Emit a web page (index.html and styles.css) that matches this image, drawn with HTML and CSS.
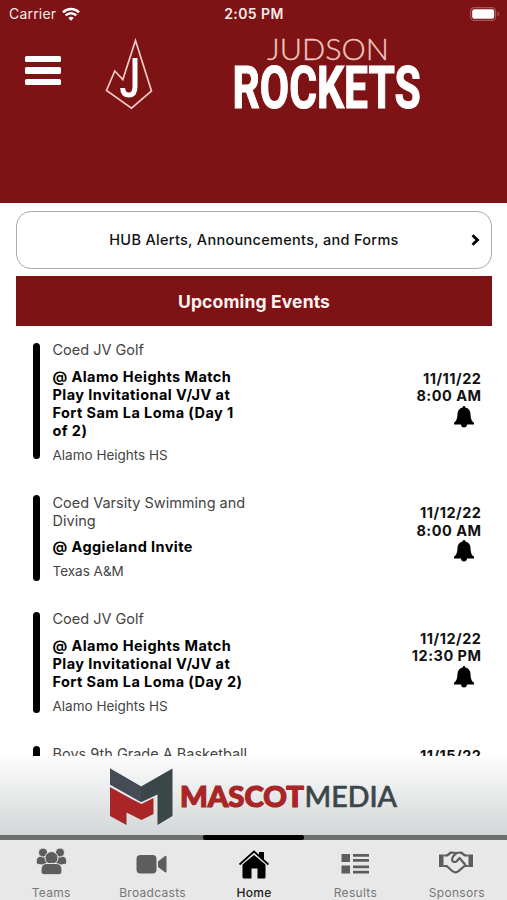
FILE: index.html
```html
<!DOCTYPE html>
<html lang="en">
<head>
<meta charset="utf-8">
<title>Judson Rockets</title>
<link rel="stylesheet" href="styles.css">
</head>
<body>
<svg class="defs" width="0" height="0" aria-hidden="true">
  <symbol id="bell" viewBox="0 0 20 22"><path d="M10 0c.9 0 1.400.6 1.400 1.500 3.200.7 4.900 3.100 5.100 6.200.3 5 .8 6.900 3.500 9.100v1.800H0v-1.800c2.700-2.200 3.200-4.100 3.500-9.100.2-3.100 1.900-5.500 5.100-6.200C8.600.6 9.100 0 10 0zM7 18.500h6c0 1.900-1.400 3-3 3s-3-1.100-3-3z"/></symbol>
</svg>
<div class="app">
  <header class="header">
    <div class="status">
      <div class="carrier"><span class="carrier-name">Carrier</span>
        <svg class="wifi" viewBox="0 0 18 14"><path d="M9 13.700 6.300 10.900a4 4 0 0 1 5.400 0z" fill="#fff"/><path d="M3.700 8.300a7.600 7.600 0 0 1 10.600 0M1 5.300a11.500 11.500 0 0 1 16 0" fill="none" stroke="#fff" stroke-width="2.500"/></svg>
      </div>
      <time class="clock">2:05 PM</time>
      <svg class="battery" viewBox="0 0 30 14"><rect x=".6" y=".6" width="25" height="12.800" rx="3.600" fill="none" stroke="#a85557" stroke-width="1.200"/><rect x="2.200" y="2.200" width="22" height="9.600" rx="2.200" fill="#fff"/><path d="M27.500 4.600c2.300.9 2.300 3.900 0 4.800z" fill="#a85557"/></svg>
    </div>
    <div class="brand">
      <div class="menu"><i></i><i></i><i></i></div>
      <svg class="crest" viewBox="0 0 50 76"><path d="M30.500 5.500 46.500 56 26.500 73.200 1.500 55.500 9.800 36 17.800 44.500z" fill="none" stroke="#f1c9c5" stroke-width="1.700"/><path d="M30 23v28.500q0 8.500-6 8.500-6.300 0-6.300-7" fill="none" stroke="#fff" stroke-width="5"/></svg>
      <svg class="wordmark" viewBox="0 0 200 76"><text class="judson" x="36" y="24.500" textLength="122" lengthAdjust="spacingAndGlyphs">JUDSON</text><text class="rockets" transform="translate(1.500 72.500) scale(.67 1)" x="0" y="0" textLength="281" lengthAdjust="spacingAndGlyphs">ROCKETS</text></svg>
    </div>
  </header>
  <main class="content">
    <div class="hub"><span class="hub-text">HUB Alerts, Announcements, and Forms</span>
      <svg class="chevron" viewBox="0 0 9 12"><path d="M1.500 1.200 6.500 6l-5 4.800" fill="none" stroke="#000" stroke-width="2.800"/></svg>
    </div>
    <h1 class="title">Upcoming Events</h1>
    <section class="events">
      <article class="event event-four">
        <div class="bar"></div>
        <div class="info"><p class="team">Coed JV Golf</p><h2>@ Alamo Heights Match<br>Play Invitational V/JV at<br>Fort Sam La Loma (Day 1<br>of 2)</h2><p class="place">Alamo Heights HS</p></div>
        <div class="when"><span>11/11/22</span><span>8:00 AM</span><svg class="bell"><use href="#bell"/></svg></div>
      </article>
      <article class="event event-short">
        <div class="bar"></div>
        <div class="info"><p class="team">Coed Varsity Swimming and<br>Diving</p><h2>@ Aggieland Invite</h2><p class="place">Texas A&amp;M</p></div>
        <div class="when"><span>11/12/22</span><span>8:00 AM</span><svg class="bell"><use href="#bell"/></svg></div>
      </article>
      <article class="event">
        <div class="bar"></div>
        <div class="info"><p class="team">Coed JV Golf</p><h2>@ Alamo Heights Match<br>Play Invitational V/JV at<br>Fort Sam La Loma (Day 2)</h2><p class="place">Alamo Heights HS</p></div>
        <div class="when"><span>11/12/22</span><span>12:30 PM</span><svg class="bell"><use href="#bell"/></svg></div>
      </article>
      <article class="event event-last">
        <div class="bar"></div>
        <div class="info"><p class="team">Boys 9th Grade A Basketball</p></div>
        <div class="when"><span>11/15/22</span></div>
      </article>
    </section>
  </main>
  <div class="sponsor">
    <svg class="mascot" viewBox="0 0 290 60"><path d="M1 1.500 32 19.500 63.500 1.500V49L48.500 58V27.500L32.500 35 1 17.500z" fill="#3b4649"/><path d="M1 1.500 32 19.500V35L1 17.500z" fill="#454c55"/><path d="M1 20 22.500 32 32.500 37 44.500 31V47L32.500 53 17.500 45.500V58L1 49z" fill="#a92526"/><text class="mascot-bold" x="71" y="39.700" textLength="124" lengthAdjust="spacingAndGlyphs">MASCOT</text><text class="mascot-light" x="195.500" y="39.700" textLength="92.500" lengthAdjust="spacingAndGlyphs">MEDIA</text></svg>
  </div>
  <nav class="tabs">
    <a class="tab"><svg viewBox="0 0 36 30"><g fill="#5d5d5d" stroke="#e8e8e8" stroke-width="1"><path d="M3.500 18c-1-5 1-8 5-8s6 3 6 8q-6 2-11 0zM22.500 18c0-5 2-8 6-8s6 3 5 8q-5 2-11 0z"/><circle cx="10" cy="6.500" r="4.500"/><circle cx="27" cy="6.500" r="4.500"/><circle cx="18.500" cy="12" r="6.500"/><path d="M8 25c0-5 2-7.500 6-7.500h9c4 0 6 2.500 6 7.500 0 2.600-1.200 3.700-3.500 3.700h-14C9.200 28.700 8 27.600 8 25z"/></g></svg><span>Teams</span></a>
    <a class="tab"><svg viewBox="0 0 36 30"><rect x="2.500" y="9" width="20" height="18.500" rx="4" fill="#5d5d5d"/><path d="M24 15.500 31 10Q32.500 9.200 32.500 11v14.500q0 1.600-1.500.8L24 21z" fill="#5d5d5d"/></svg><span>Broadcasts</span></a>
    <a class="tab active"><svg viewBox="0 0 36 30"><path d="M7.500 18.500 19 9l11.500 9.500v12.500q0 1.500-1.500 1.500h-6.500v-10h-6v10H9q-1.500 0-1.500-1.500z"/><path d="M4.500 18.500 19 5.500 33.500 18.500" fill="none" stroke="#000" stroke-width="1.700"/><path d="M24 6h5v8l-5-4z"/></svg><span>Home</span></a>
    <a class="tab"><svg viewBox="0 0 36 30"><path d="M4.500 8h8.500v8H4.500zM4.500 19.500h8.500v8H4.500zM16 8h16v2.800H16zM16 13h16v2.800H16zM16 19.500h16v2.800H16zM16 24.700h16v2.800H16z" fill="#5d5d5d"/></svg><span>Results</span></a>
    <a class="tab"><svg viewBox="0 0 36 30"><path d="M1 8.500h4.500V21H1zM30.500 8.500H35V21h-4.500z" fill="#5d5d5d"/><path d="M5.500 9.500h3.500l4-3 5 .5 5-.5 4 3h3.500M5.500 20l3.500.2 5.500 5q3 2.300 6 0l6-5.200h4M18.500 7.500q-4 2-4.500 6.500 1 3 4.500 1.500l3-3.500 6 7" fill="none" stroke="#5d5d5d" stroke-width="2.200" stroke-linejoin="round"/></svg><span>Sponsors</span></a>
  </nav>
</div>
</body>
</html>
```
FILE: styles.css
```css
* { box-sizing: border-box; }
body { margin: 0; font-family: Inter, "Liberation Sans", sans-serif; color: #111; background: #fff; }
p, h1, h2 { margin: 0; }
.defs { display: block; }
.app { width: 507px; height: 900px; display: flex; flex-direction: column; overflow: hidden; }

.header { height: 203px; flex: none; background: #7d1315; color: #f9e9e7; }
.status { height: 27px; padding: 0 7px 0 9px; display: grid; grid-template-columns: 1fr auto 1fr; align-items: center; }
.carrier { display: flex; align-items: center; gap: 6px; font-size: 14px; letter-spacing: .2px; }
.wifi { width: 18px; height: 14px; }
.clock { font-size: 14px; font-weight: 600; letter-spacing: .4px; margin-left: -1px; }
.battery { width: 30px; height: 14px; justify-self: end; }
.brand { display: flex; height: 85px; padding: 8px 0 0 25px; }
.menu { width: 36px; padding-top: 20.500px; display: flex; flex-direction: column; gap: 5.500px; }
.menu i { height: 6.300px; background: #fff; border-radius: 1.500px; flex: none; }
.crest { width: 50px; height: 76px; margin-left: 44px; }
.wordmark { width: 200px; height: 76px; margin-left: 76px; overflow: visible; }
.judson { font: 300 28.500px Lato, sans-serif; fill: #f3c5bd; stroke: #f3c5bd; stroke-width: .3; }
.rockets { font: 700 60px Roboto, sans-serif; fill: #fff; stroke: #fff; stroke-width: 1.200; }

.content { flex: 1; min-height: 0; overflow: hidden; padding: 8px 15px 0 16px; }
.hub { height: 57.500px; border: 1.500px solid #aaa; border-radius: 15px; display: grid; grid-template-columns: 1fr auto 1fr; align-items: center; padding: 0 11px; }
.hub-text { grid-column: 2; font-size: 14.500px; font-weight: 500; letter-spacing: .3px; }
.chevron { width: 9px; height: 12px; justify-self: end; }
.title { height: 50px; margin-top: 7.500px; background: #7d1315; color: #fff4f1; font-size: 17.500px; font-weight: 650; letter-spacing: .15px; display: flex; align-items: center; justify-content: center; }
.events { padding: 15.300px 11px 0 16.500px; }
.event { display: flex; margin-bottom: 29px; line-height: 17.900px; }
.bar { width: 7.500px; margin: 1.500px 12.500px 2.500px 0; border-radius: 4px; background: #000; }
.event-four .bar { margin-bottom: 5.500px; }
.event-short .bar { margin-bottom: .5px; }
.info { flex: 1; }
.team { font-size: 14.500px; color: #444; }
.info h2 { font-size: 14.500px; font-weight: 700; letter-spacing: .42px; line-height: inherit; margin: 8.600px 0 7.400px; color: #000; }
.place { font-size: 13.500px; color: #444; }
.when { align-self: center; display: flex; flex-direction: column; align-items: flex-end; height: 67px; font-size: 14.500px; font-weight: 650; letter-spacing: .5px; }
.when span { margin-right: -.5px; }
.bell { width: 20px; height: 22px; margin: .5px 7px 0 0; }
.event-last { height: 60px; }
.event-last .when { align-self: flex-start; margin-top: 2px; }

.sponsor { height: 79px; flex: none; display: flex; padding: 11px 0 0 109px; background: linear-gradient(#fdfdfd, #d3d6d7); }
.mascot { width: 290px; height: 60px; }
.mascot-bold { font: 900 28.500px Lato, sans-serif; fill: #a92526; stroke: #a92526; stroke-width: 1.200; }
.mascot-light { font: 500 28.500px Lato, sans-serif; fill: #3b4649; stroke: #3b4649; stroke-width: .6; }
.tabs { height: 65px; flex: none; display: grid; grid-template-columns: repeat(5, 1fr); background: #e8e8e8; color: #777; font-size: 12px; }
.tab { border-top: 5px solid #6c6d6d; padding-top: 6px; display: flex; flex-direction: column; align-items: center; }
.tab svg { width: 36px; height: 30px; overflow: visible; }
.tab span { margin: 8.500px 0 0 1px; line-height: 16px; letter-spacing: .3px; }
.active { position: relative; color: #222; font-weight: 500; }
.active::before { content: ""; position: absolute; top: -5px; left: 0; right: 0; height: 5px; background: #000; border-radius: 2px; }
```
